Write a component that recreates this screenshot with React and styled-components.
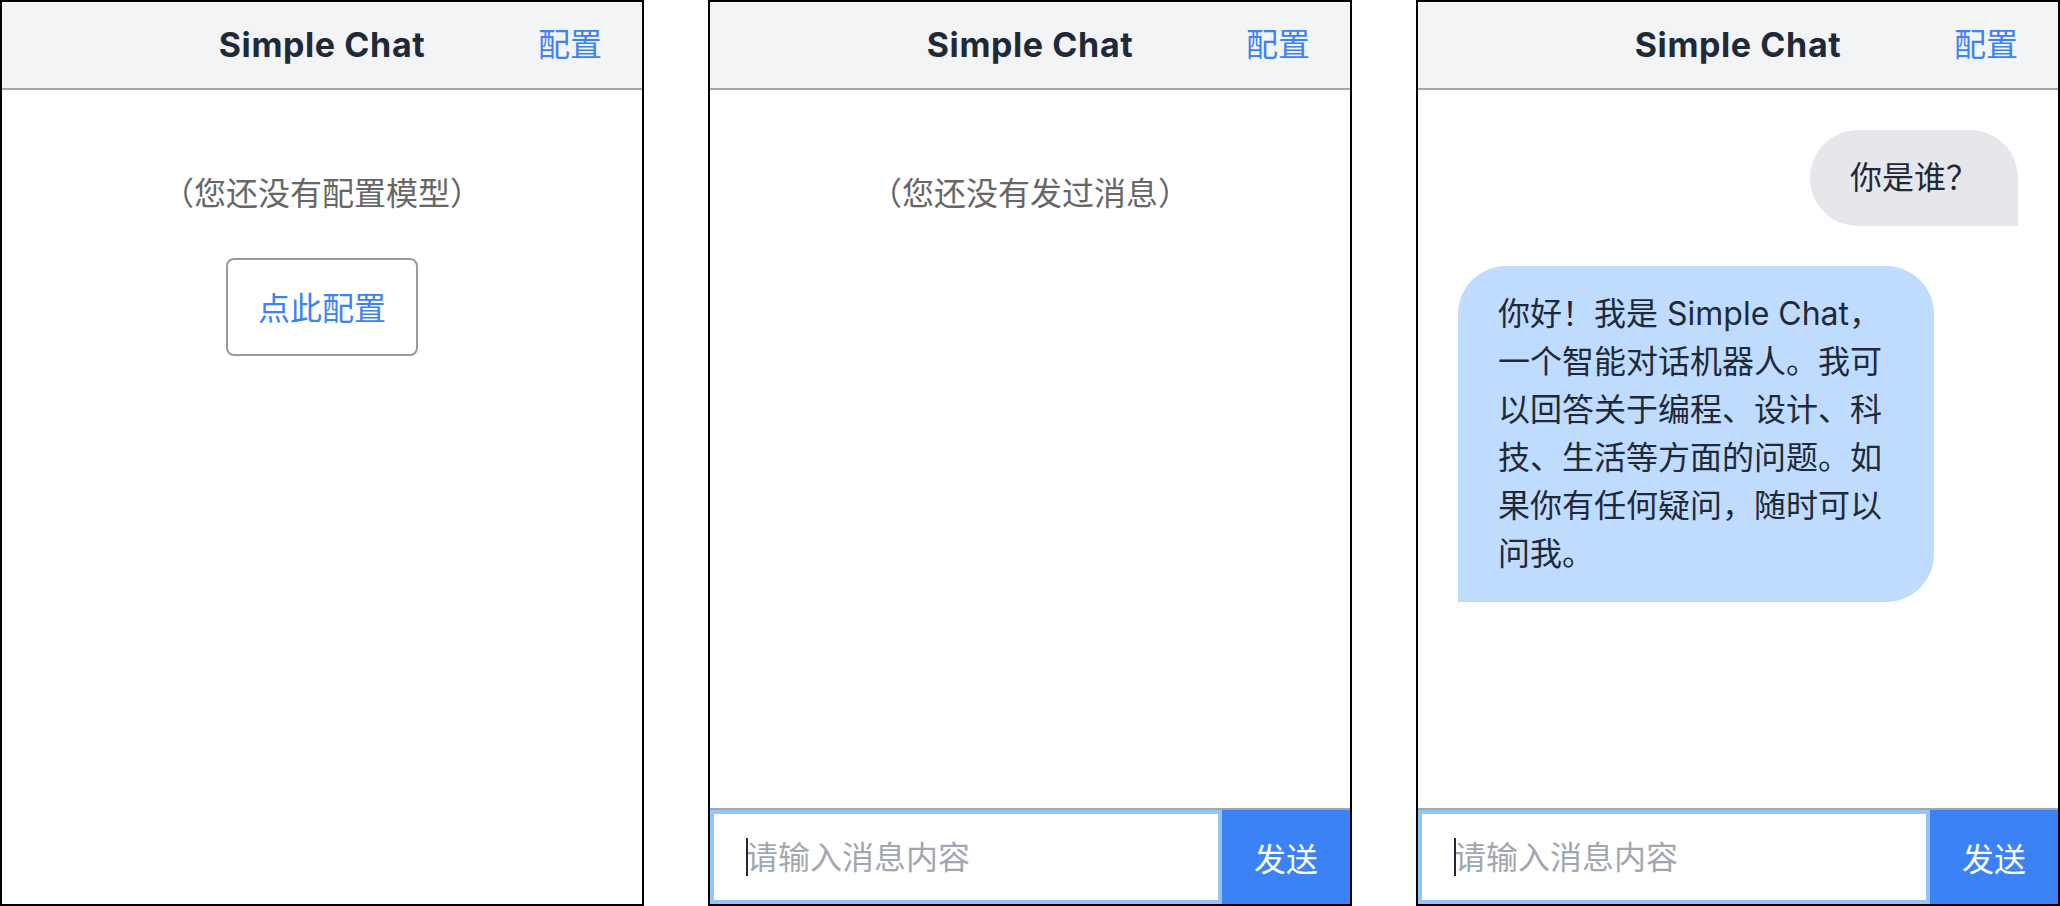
import React from "react";
import styled, { createGlobalStyle } from "styled-components";

const Global = createGlobalStyle`
  * { box-sizing: border-box; }
  html, body { margin: 0; padding: 0; background: #ffffff; }
  body {
    font-family: Inter, "Noto Sans CJK SC", "Noto Sans", sans-serif;
    -webkit-font-smoothing: antialiased;
  }
`;

const Page = styled.div`
  display: flex;
  gap: 64px;
  width: 2060px;
  height: 906px;
`;

const Phone = styled.section`
  width: 644px;
  height: 906px;
  border: 2px solid #000000;
  display: flex;
  flex-direction: column;
  background: #ffffff;
  overflow: hidden;
`;

const Header = styled.header`
  height: 88px;
  flex: none;
  display: grid;
  grid-template-columns: 1fr auto 1fr;
  align-items: center;
  padding: 0 40px;
  background: #f3f4f6;
  border-bottom: 2px solid #a6a6a6;
`;

const Title = styled.h1`
  grid-column: 2;
  margin: 0;
  font-size: 34px;
  font-weight: 700;
  letter-spacing: 0.6px;
  line-height: 48px;
  color: #1f2937;
`;

const ConfigLink = styled.a`
  grid-column: 3;
  justify-self: end;
  font-size: 32px;
  line-height: 48px;
  color: #3b82f6;
  text-decoration: none;
  cursor: pointer;
`;

const Body = styled.main`
  flex: 1;
  min-height: 0;
  display: flex;
  flex-direction: column;
  align-items: ${(p) => (p.$empty ? "center" : "stretch")};
  gap: 40px;
  padding: ${(p) => (p.$empty ? "80px 40px 40px" : "40px")};
`;

const EmptyText = styled.p`
  margin: 0;
  font-size: 32px;
  line-height: 48px;
  color: #666666;
`;

const OutlineButton = styled.button`
  font-family: inherit;
  font-size: 32px;
  line-height: 48px;
  color: #3b82f6;
  background: #ffffff;
  border: 2px solid #9a9a9a;
  border-radius: 8px;
  padding: 25px 30px 21px;
  cursor: pointer;
`;

const Bubble = styled.div`
  font-size: 32px;
  line-height: 48px;
  color: #1f2937;
  padding: 24px 40px;
  max-width: 85%;
  align-self: ${(p) => (p.$mine ? "flex-end" : "flex-start")};
  background: ${(p) => (p.$mine ? "#e5e7eb" : "#bfdbfe")};
  border-radius: ${(p) => (p.$mine ? "48px 48px 0 48px" : "48px 48px 48px 0")};
`;

const Composer = styled.form`
  flex: none;
  height: 96px;
  display: flex;
  border-top: 2px solid #a6a6a6;
  margin: 0;
`;

const InputWrap = styled.div`
  position: relative;
  flex: 1 1 0;
  min-width: 0;
  display: flex;
  border: 4px solid #93c5fd;
`;

const TextInput = styled.input`
  flex: 1 1 0;
  width: 100%;
  min-width: 0;
  border: none;
  outline: none;
  padding: 0 0 0 32px;
  font-family: inherit;
  font-size: 32px;
  color: #1f2937;
  background: #ffffff;
  caret-color: transparent;
  &::placeholder {
    color: #a1a7b1;
  }
`;

const Caret = styled.span`
  position: absolute;
  left: 32px;
  top: 24px;
  width: 2px;
  height: 38px;
  background: #1f2937;
  pointer-events: none;
`;

const SendButton = styled.button`
  flex: none;
  width: 128px;
  border: none;
  padding: 0;
  background: #3b82f6;
  color: #ffffff;
  font-family: inherit;
  font-size: 32px;
  cursor: pointer;
`;

function PhoneHeader() {
  return (
    <Header>
      <Title>Simple Chat</Title>
      <ConfigLink>配置</ConfigLink>
    </Header>
  );
}

function ChatComposer() {
  return (
    <Composer onSubmit={(e) => e.preventDefault()}>
      <InputWrap>
        <TextInput placeholder="请输入消息内容" />
        <Caret />
      </InputWrap>
      <SendButton type="submit">发送</SendButton>
    </Composer>
  );
}

export default function App() {
  return (
    <>
      <Global />
      <Page>
        <Phone>
          <PhoneHeader />
          <Body $empty>
            <EmptyText>（您还没有配置模型）</EmptyText>
            <OutlineButton>点此配置</OutlineButton>
          </Body>
        </Phone>
        <Phone>
          <PhoneHeader />
          <Body $empty>
            <EmptyText>（您还没有发过消息）</EmptyText>
          </Body>
          <ChatComposer />
        </Phone>
        <Phone>
          <PhoneHeader />
          <Body>
            <Bubble $mine>你是谁？</Bubble>
            <Bubble>
              你好！我是 Simple Chat，一个智能对话机器人。我可以回答关于编程、设计、科技、生活等方面的问题。如果你有任何疑问，随时可以问我。
            </Bubble>
          </Body>
          <ChatComposer />
        </Phone>
      </Page>
    </>
  );
}
